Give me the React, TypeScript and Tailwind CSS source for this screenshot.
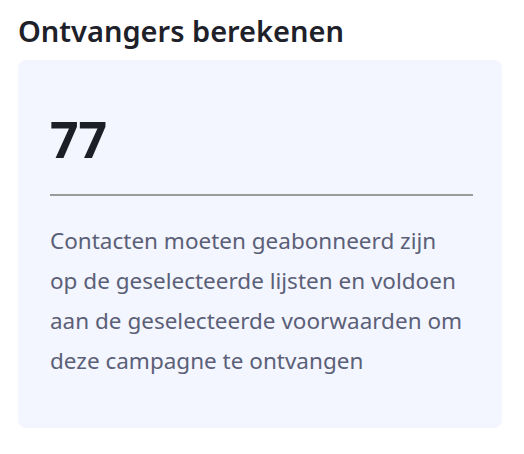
import React from 'react'

const RecipientCount: React.FC = () => {
  const count = 77

  return (
    <div className="min-h-screen bg-white pl-[18px] pr-[22px] pt-[13px] font-['Noto_Sans',sans-serif]">
      <h2 className="text-[29px] font-semibold leading-9 text-[#1e2129]">Ontvangers berekenen</h2>

      <div className="mt-[11px] rounded-lg bg-[#f3f6fe] pt-[54px] pb-[47px] pl-8 pr-[29px]">
        <div className="text-[50px] font-bold leading-none text-[#1c1f26]">{count}</div>

        <div className="mt-[30px] h-[2px] bg-[#9b9b9b]" />

        <p className="mt-[25px] whitespace-nowrap text-[22.5px] leading-10 text-[#5b6078]">
          Contacten moeten geabonneerd zijn
          <br />
          op de geselecteerde lijsten en voldoen
          <br />
          aan de geselecteerde voorwaarden om
          <br />
          deze campagne te ontvangen
        </p>
      </div>
    </div>
  )
}

export default function App() {
  return <RecipientCount />
}
